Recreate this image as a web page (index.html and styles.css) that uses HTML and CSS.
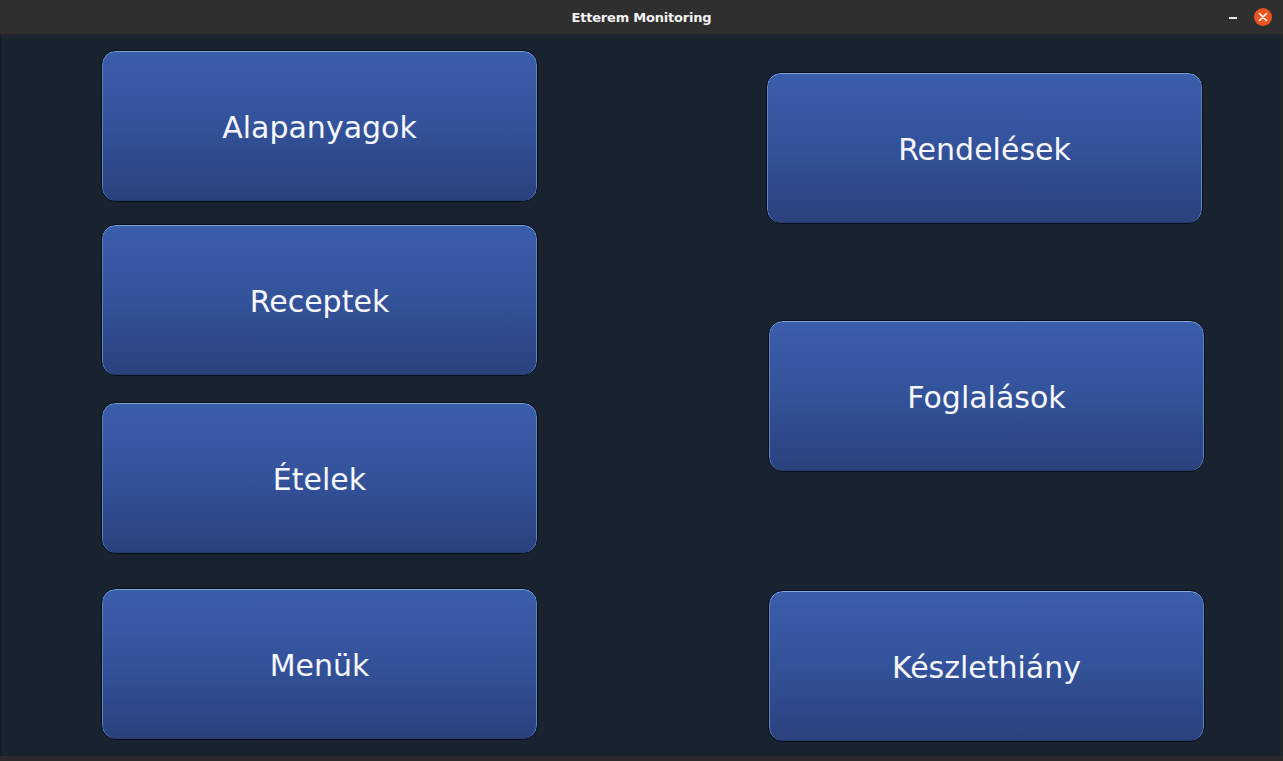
FILE: index.html
```html
<!DOCTYPE html>
<html lang="hu">
<head>
<meta charset="utf-8">
<title>Etterem Monitoring</title>
<link rel="stylesheet" href="styles.css">
</head>
<body>
<div class="window">
  <header class="titlebar">
    <span class="title">Etterem Monitoring</span>
    <div class="controls">
      <span class="minimize"></span>
      <span class="close">
        <svg width="10" height="10" viewBox="0 0 10 10"><path d="M1.5 1.5 L8.5 8.5 M8.5 1.5 L1.5 8.5" stroke="#fff" stroke-width="1.6" stroke-linecap="round"/></svg>
      </span>
    </div>
  </header>
  <main class="content">
    <div class="col col-left">
      <button class="btn">Alapanyagok</button>
      <button class="btn">Receptek</button>
      <button class="btn gap-28">Ételek</button>
      <button class="btn gap-36">Menük</button>
    </div>
    <div class="col col-right">
      <button class="btn">Rendelések</button>
      <button class="btn shift gap-98">Foglalások</button>
      <button class="btn shift gap-120">Készlethiány</button>
    </div>
  </main>
  <div class="bottom"></div>
</div>
</body>
</html>
```

FILE: styles.css
```css
html, body {
  margin: 0;
  padding: 0;
  width: 1283px;
  height: 761px;
  overflow: hidden;
  background: #19222f;
}
.window {
  display: flex;
  flex-direction: column;
  height: 761px;
  font-family: "DejaVu Sans", sans-serif;
}
.titlebar {
  height: 35px;
  flex: none;
  background: #302f2f;
  display: flex;
  align-items: center;
  justify-content: center;
  position: relative;
  border-bottom: 1px solid #262626;
  box-sizing: border-box;
}
.title {
  color: #f2f2f2;
  font-family: "DejaVu Sans", sans-serif;
  font-weight: bold;
  font-size: 13px;
  letter-spacing: -0.2px;
}
.controls {
  position: absolute;
  right: 11px;
  top: 8px;
  display: flex;
  align-items: center;
  gap: 17px;
}
.minimize {
  width: 8px;
  height: 2px;
  background: #e6e6e6;
  margin-top: 2px;
}
.close {
  width: 18px;
  height: 18px;
  border-radius: 50%;
  background: #e9541f;
  display: flex;
  align-items: center;
  justify-content: center;
}
.content {
  flex: 1;
  display: flex;
  align-items: flex-start;
  padding: 15px 0 0 100px;
  background: #19222f;
  border-left: 1px solid #141a24;
  border-right: 2px solid #232629;
}
.col {
  display: flex;
  flex-direction: column;
  gap: 22px;
}
.col-right {
  margin-left: 228px;
  padding-top: 22px;
  gap: 0;
}
.btn {
  display: block;
  margin: 0;
  width: 437px;
  height: 152px;
  box-sizing: border-box;
  border: 1px solid #080c14;
  border-radius: 15px;
  background: linear-gradient(to bottom, #3b5eab 0%, #33529a 50%, #2a417d 100%);
  box-shadow: inset 0 1px 0 #7aa8e2, inset 1px 0 0 #5a86c6, inset -1px 0 0 #5a86c6, inset 0 -1px 0 #243a70;
  color: #f6f7fc;
  font-family: "DejaVu Sans", sans-serif;
  font-size: 30px;
  padding: 2px 0 0;
  cursor: pointer;
}
.gap-28 { margin-top: 4px; }
.gap-36 { margin-top: 12px; }
.gap-98 { margin-top: 96px; }
.gap-120 { margin-top: 118px; }
.shift { margin-left: 2px; }
.bottom {
  height: 5px;
  flex: none;
  background: #2a2a2a;
}
```
